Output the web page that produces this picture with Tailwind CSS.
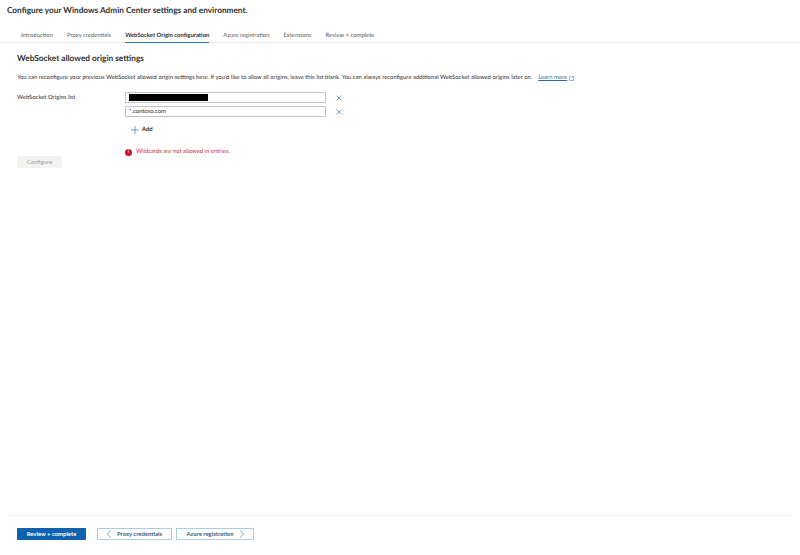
<!DOCTYPE html>
<html lang="en">
<head>
    <meta charset="UTF-8">
    <title>Configure Windows Admin Center</title>
    <script src="https://cdn.jsdelivr.net/npm/@tailwindcss/browser@4"></script>
</head>
<body class="bg-white">
<div class="h-[555px] w-[800px] flex flex-col overflow-hidden text-[#323130] font-['Lato',sans-serif] [text-rendering:geometricPrecision]">
    <!-- Title -->
    <h1 class="pl-[7px] pt-[4px] h-[28px] text-[8.25px] leading-[13px] font-bold text-[#323130]">Configure your Windows Admin Center settings and environment.</h1>

    <!-- Tabs -->
    <div class="flex gap-[14px] pl-[21px] h-[15px] border-b border-[#edebe9] text-[5.9px] leading-[10px] pt-[2px] text-[#605e5c]">
        <span class="pt-px">Introduction</span>
        <span class="pt-px">Proxy credentials</span>
        <span class="h-[13px] pt-px border-b border-[#2f6ea5] font-bold text-[#323130]">WebSocket Origin configuration</span>
        <span class="pt-px">Azure registration</span>
        <span class="pt-px">Extensions</span>
        <span class="pt-px">Review + complete</span>
    </div>

    <!-- Main content -->
    <div class="flex-1 pl-[17px]">
        <h2 class="mt-[9px] text-[8.3px] leading-[12px] font-bold text-[#323130]">WebSocket allowed origin settings</h2>
        <p class="mt-[9px] flex text-[5.9px] leading-[10px]">
            You can reconfigure your previous WebSocket allowed origin settings here. If you'd like to allow all origins, leave this list blank. You can always reconfigure additional WebSocket allowed origins later on.
            <a class="ml-[6px] text-[#2f6ea5] underline flex items-center gap-[2px]">Learn more
                <svg class="w-[5px] h-[5px]" viewBox="0 0 10 10" fill="none" stroke="#2f6ea5" stroke-width="1"><path d="M4 1H1v8h8V6M6 1h3v3M9 1L5 5"/></svg>
            </a>
        </p>

        <div class="mt-[9px] flex">
            <label class="w-[108px] pt-[1px] text-[5.9px] leading-[10px]">WebSocket Origins list</label>
            <div>
                <div class="flex items-center gap-[10px]">
                    <div class="w-[201px] h-[11px] border border-[#c8c6c4] pl-[3px] flex items-center">
                        <div class="w-[79px] h-[7px] bg-black"></div>
                    </div>
                    <svg class="w-[6px] h-[6px]" viewBox="0 0 10 10" stroke="#2f6ea5" stroke-width="1"><path d="M1 1l8 8M9 1l-8 8"/></svg>
                </div>
                <div class="mt-[3px] flex items-center gap-[10px]">
                    <div class="w-[201px] h-[11px] border border-[#c8c6c4] pl-[3px] flex items-center text-[5.9px] leading-[9px]">*.contoso.com</div>
                    <svg class="w-[6px] h-[6px]" viewBox="0 0 10 10" stroke="#2f6ea5" stroke-width="1"><path d="M1 1l8 8M9 1l-8 8"/></svg>
                </div>
                <div class="mt-[8px] ml-[6px] flex items-center gap-[3px] h-[10px] text-[5.9px] font-bold">
                    <svg class="w-[8px] h-[8px]" viewBox="0 0 10 10" stroke="#2f6ea5" stroke-width="0.8"><path d="M5 0v10M0 5h10"/></svg>
                    Add
                </div>
                <div class="mt-[14px] flex items-center gap-[4px] h-[7px] text-[5.9px] text-[#c4314b]">
                    <span class="w-[7px] h-[7px] rounded-full bg-[#d0132c] text-white text-[5px] leading-[7px] font-bold text-center">!</span>
                    Wildcards are not allowed in entries.
                </div>
            </div>
        </div>

        <button class="block w-[45px] h-[12px] bg-[#f3f2f1] text-[5.9px] leading-[12px] text-[#a19f9d]">Configure</button>
    </div>

    <!-- Footer -->
    <div class="h-[40px] mx-[7px] border-t border-[#edebe9] pl-[10px] pt-[12px] flex gap-[4px] text-[5.9px]">
        <button class="w-[69px] h-[12px] mr-[7px] bg-[#0f62ad] text-white font-bold leading-[12px] rounded-[1px]">Review + complete</button>
        <button class="w-[75px] h-[12px] border border-[#a9cbe6] text-[#3a5f80] font-bold flex items-center justify-center gap-[6px]">
            <svg class="w-[4px] h-[8px]" viewBox="0 0 4 8" fill="none" stroke="#2f6ea5" stroke-width="0.6"><path d="M3.7 0.3L0.4 4l3.3 3.7"/></svg>
            Proxy credentials
        </button>
        <button class="w-[78px] h-[12px] border border-[#a9cbe6] text-[#3a5f80] font-bold flex items-center justify-center gap-[6px]">
            Azure registration
            <svg class="w-[4px] h-[8px]" viewBox="0 0 4 8" fill="none" stroke="#2f6ea5" stroke-width="0.6"><path d="M0.3 0.3L3.6 4l-3.3 3.7"/></svg>
        </button>
    </div>
</div>
</body>
</html>
